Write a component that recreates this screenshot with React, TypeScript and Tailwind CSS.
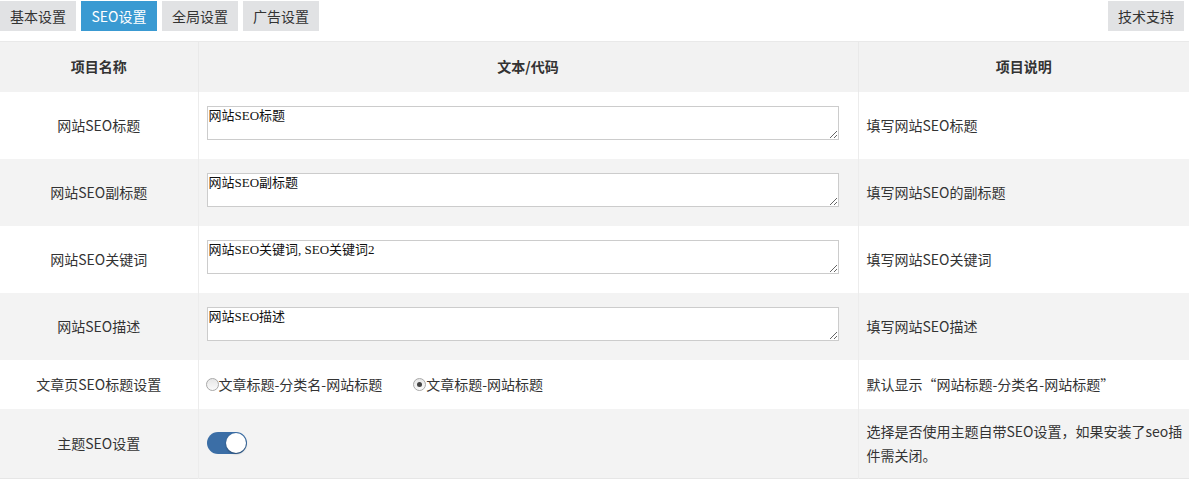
import React from 'react'

const tabs = ['基本设置', 'SEO设置', '全局设置', '广告设置']

const textRows = [
  { name: '网站SEO标题', value: '网站SEO标题', desc: '填写网站SEO标题' },
  { name: '网站SEO副标题', value: '网站SEO副标题', desc: '填写网站SEO的副标题' },
  { name: '网站SEO关键词', value: '网站SEO关键词, SEO关键词2', desc: '填写网站SEO关键词' },
  { name: '网站SEO描述', value: '网站SEO描述', desc: '填写网站SEO描述' },
]

function Radio({ checked, label }: { checked?: boolean; label: string }) {
  return (
    <label className="flex items-center">
      <span className="w-[13px] h-[13px] rounded-full border border-[#a9a9a9] bg-gradient-to-b from-[#e6e6e6] to-[#fafafa] flex items-center justify-center">
        {checked && <span className="w-[5px] h-[5px] rounded-full bg-[#444]" />}
      </span>
      <span>{label}</span>
    </label>
  )
}

export default function App() {
  return (
    <div className="w-[1189px] h-[481px] bg-white text-[14px] text-[#333] font-['Microsoft_YaHei','Noto_Sans_CJK_SC',sans-serif] overflow-hidden">
      <div className="flex items-start justify-between h-[41px] pt-[1px]">
        <div className="flex gap-[5px]">
          {tabs.map((t, i) => (
            <div
              key={t}
              className={`h-[30px] w-[76px] flex items-center justify-center ${
                i === 1 ? 'bg-[#3a9ad2] text-white w-[75px]' : 'bg-[#e1e2e4] text-[#333]'
              }`}
            >
              {t}
            </div>
          ))}
        </div>
        <div className="h-[30px] w-[76px] mr-[5px] flex items-center justify-center bg-[#e1e2e4]">技术支持</div>
      </div>

      <table className="table-fixed border-collapse w-full">
        <colgroup>
          <col className="w-[198px]" />
          <col className="w-[660px]" />
          <col className="w-[331px]" />
        </colgroup>
        <thead>
          <tr className="h-[50px] bg-[#f2f2f2] border-t border-[#e9e9e9]">
            <th className="font-bold border-r border-[#e9e9e9]">项目名称</th>
            <th className="font-bold border-r border-[#e9e9e9]">文本/代码</th>
            <th className="font-bold">项目说明</th>
          </tr>
        </thead>
        <tbody>
          {textRows.map((r, i) => (
            <tr key={r.name} className={`h-[67px] ${i % 2 === 1 ? 'bg-[#f3f3f3]' : 'bg-white'}`}>
              <td className="text-center border-r border-[#ececec]">{r.name}</td>
              <td className="border-r border-[#ececec] px-[8px] align-top pt-[14px]">
                <textarea
                  defaultValue={r.value}
                  className="block w-[632px] h-[34px] border border-[#cccccc] bg-white text-[13px] font-normal leading-[15px] text-[#111] font-['Liberation_Serif','Noto_Sans_CJK_SC',serif] px-[1px] py-[1px] outline-none"
                />
              </td>
              <td className="px-[8px]">{r.desc}</td>
            </tr>
          ))}
          <tr className="h-[49px] bg-white">
            <td className="text-center border-r border-[#ececec]">文章页SEO标题设置</td>
            <td className="border-r border-[#ececec] px-[7px]">
              <div className="flex gap-[31px]">
                <Radio label="文章标题-分类名-网站标题" />
                <Radio checked label="文章标题-网站标题" />
              </div>
            </td>
            <td className="px-[8px]">默认显示“网站标题-分类名-网站标题”</td>
          </tr>
          <tr className="h-[70px] bg-[#f3f3f3] border-b border-[#e6e6e6]">
            <td className="text-center border-r border-[#ececec]">主题SEO设置</td>
            <td className="border-r border-[#ececec] px-[8px]">
              <div className="relative w-[40px] h-[22px] rounded-full bg-[#3b6ea6]">
                <span className="absolute right-[1px] top-[1px] w-[20px] h-[20px] rounded-full bg-white shadow-[0_1px_2px_rgba(0,0,0,0.35)]" />
              </div>
            </td>
            <td className="pl-[8px] pr-[2px] leading-[24px]">选择是否使用主题自带SEO设置，如果安装了seo插件需关闭。</td>
          </tr>
        </tbody>
      </table>
    </div>
  )
}
